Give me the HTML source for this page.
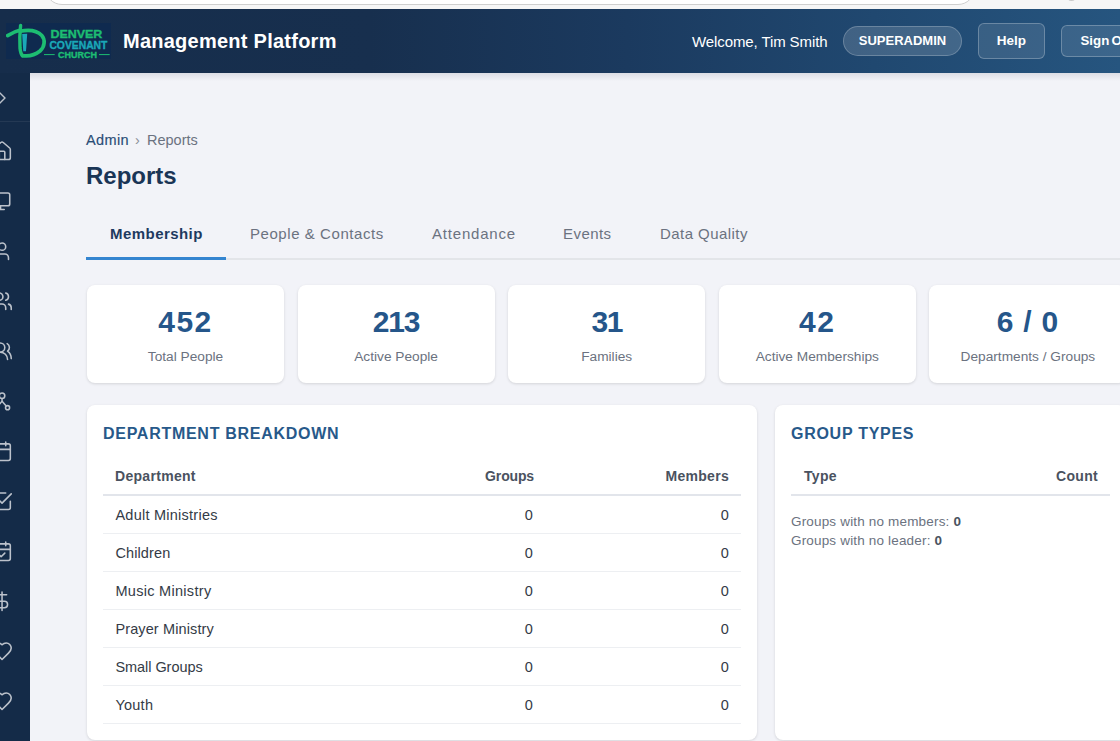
<!DOCTYPE html>
<html><head><meta charset="utf-8">
<style>
*{box-sizing:border-box;margin:0;padding:0}
html,body{width:1120px;height:741px;overflow:hidden;background:#f2f3f8;font-family:"Liberation Sans",sans-serif}
#chrome{position:absolute;left:0;top:0;width:1120px;height:9px;background:#f6f6f6;overflow:hidden}
#addr{position:absolute;left:45px;top:-29px;width:930px;height:34px;background:#fff;border:1px solid #cfcfcf;border-radius:17px}
#dot{position:absolute;left:1068px;top:-4px;width:7px;height:5px;border-radius:50%;background:#c9c9c9}
#hdr{position:absolute;left:0;top:9px;width:1120px;height:64px;background:linear-gradient(90deg,#162d4b 0%,#172f4e 33%,#1b3a5f 56%,#204870 78%,#26557f 100%)}
#logo{position:absolute;left:6px;top:14px;width:105px;height:36px;background:#0f2a4f}
#title{position:absolute;left:123px;top:21px;color:#fff;font-weight:bold;font-size:20px;letter-spacing:0.25px;white-space:nowrap}
#welcome{position:absolute;left:692px;top:24px;color:#fff;font-size:15px;white-space:nowrap}
#pill{position:absolute;left:843px;top:17px;width:119px;height:30px;border-radius:15px;background:rgba(255,255,255,.15);border:1px solid rgba(255,255,255,.22);color:#fff;font-weight:bold;font-size:13px;text-align:center;line-height:28px}
.hbtn{position:absolute;top:14px;height:36px;border-radius:6px;background:rgba(255,255,255,.1);border:1px solid rgba(255,255,255,.25);color:#fff;font-weight:bold;font-size:13.5px;line-height:34px;padding:0 16px;white-space:nowrap}
#side{position:absolute;left:0;top:73px;width:30px;height:668px;background:#142b48;overflow:hidden}
#sep{position:absolute;left:0;top:48px;width:30px;height:1px;background:rgba(255,255,255,.07)}
#main{position:absolute;left:30px;top:73px;width:1090px;height:668px;background:#f2f3f8;overflow:hidden}
#shadow{position:absolute;left:0;top:0;width:1090px;height:8px;background:linear-gradient(180deg,rgba(20,30,60,.10),rgba(20,30,60,0))}
.crumb{position:absolute;top:59px;font-size:14.5px;white-space:nowrap}
#h1{position:absolute;left:56px;top:89px;font-size:24px;font-weight:bold;color:#1a3556}
.tab{position:absolute;top:151.5px;font-size:15px;letter-spacing:0.45px;color:#6b7280;white-space:nowrap}
#tabline{position:absolute;left:56px;top:185px;width:1040px;height:2px;background:#e3e5e9}
#tabact{position:absolute;left:56px;top:184px;width:140px;height:3px;background:#3485d0}
.stat{position:absolute;top:212px;width:197px;height:98px;background:#fff;border-radius:8px;box-shadow:0 1px 3px rgba(0,0,0,.13)}
.stat .n{position:absolute;left:0;right:0;top:20px;text-align:center;font-size:30px;letter-spacing:1.5px;font-weight:bold;color:#25568a}
.stat .l{position:absolute;left:0;right:0;top:63.5px;text-align:center;font-size:13.7px;color:#6b7280}
.card{position:absolute;top:332px;height:335px;background:#fff;border-radius:8px;box-shadow:0 1px 3px rgba(0,0,0,.13);overflow:hidden}
.ctitle{position:absolute;left:16px;top:20.3px;font-size:16px;font-weight:bold;letter-spacing:0.72px;color:#27598a;white-space:nowrap}
.th{position:absolute;top:63px;font-size:14px;letter-spacing:0.3px;font-weight:bold;color:#4a5260;white-space:nowrap}
.td{position:absolute;font-size:14.5px;letter-spacing:0.25px;color:#343b46;white-space:nowrap}
.hline{position:absolute;height:2px;background:#e2e5eb}
.rline{position:absolute;height:1px;background:#edeff2}
.note{position:absolute;left:16px;font-size:13.5px;letter-spacing:0.17px;color:#6b7280;white-space:nowrap}
.note b{color:#4a5260}
</style></head><body>
<div id="chrome"><div id="addr"></div><div id="dot"></div></div>
<div id="hdr">
  <div id="logo">
    <svg width="105" height="36" viewBox="0 0 105 36" style="position:absolute;left:0;top:0">
      <g fill="none" stroke="#1dbd72" stroke-linecap="round">
        <path d="M1.6 12.6 C5 10.5 9 8.2 14.5 7" stroke-width="3.6"/>
        <path d="M14 8.2 C22 6.6 31 7.3 35.8 12.5 C39.3 16.5 39 23.5 34 28 C29 32 22 33.4 16.5 32.6" stroke-width="3.7"/>
        <path d="M14.6 2.4 C13.9 9 13.5 18 14 25 C14.4 29 15.3 31.5 16.5 32.8" stroke-width="3.4"/>
      </g>
      <path d="M16.2 11 L21.2 10.8 L20 28.2 L17.3 28.2 Z" fill="#1aa8b8"/>
      <g font-family="Liberation Sans" font-weight="bold" stroke-width="0.35">
        <text x="44.4" y="15" font-size="10.8" fill="#1dbd72" stroke="#1dbd72" textLength="52" lengthAdjust="spacingAndGlyphs">DENVER</text>
        <text x="43.4" y="25.8" font-size="10.2" fill="#1aa8b8" stroke="#1aa8b8" textLength="58" lengthAdjust="spacingAndGlyphs">COVENANT</text>
        <text x="52.1" y="34.5" font-size="8.3" fill="#1dbd72" stroke="#1dbd72" textLength="39" lengthAdjust="spacingAndGlyphs">CHURCH</text>
      </g>
      <path d="M38 31.6h10.7M93 31.6h10.7" stroke="#1dbd72" stroke-width="1"/>
    </svg>
  </div>
  <div id="title">Management Platform</div>
  <div id="welcome" style="letter-spacing:-0.1px">Welcome, Tim Smith</div>
  <div id="pill">SUPERADMIN</div>
  <div class="hbtn" style="left:978px;width:67px;padding:0;text-align:center">Help</div>
  <div class="hbtn" style="left:1061px;top:16px;height:32px;line-height:30px;width:90px;padding-left:18.5px;border-radius:6px;font-size:13.3px;word-spacing:-1.5px">Sign Out</div>
</div>
<div id="side"><div id="sep"></div>
  <svg width="30" height="668" style="position:absolute;left:0;top:0" fill="none" stroke="#bcc2cb" stroke-width="1.7" stroke-linecap="round" stroke-linejoin="round">
<g transform="translate(-7.5,15) scale(0.833)"><path d="m9 6 6 6-6 6"/></g>
<g transform="translate(-9,67.2) scale(0.92)"><path d="M15 21v-8a1 1 0 0 0-1-1h-4a1 1 0 0 0-1 1v8"/><path d="M3 10a2 2 0 0 1 .709-1.528l7-5.999a2 2 0 0 1 2.582 0l7 5.999A2 2 0 0 1 21 10v9a2 2 0 0 1-2 2H5a2 2 0 0 1-2-2z"/></g>
<g transform="translate(-10.5,117.2) scale(0.92)"><rect width="20" height="14" x="2" y="3" rx="2"/><path d="M8 21h8M12 17v4"/></g>
<g transform="translate(-9,167.2) scale(0.92)"><path d="M19 21v-2a4 4 0 0 0-4-4H9a4 4 0 0 0-4 4v2"/><circle cx="12" cy="7" r="4"/></g>
<g transform="translate(-9,217.2) scale(0.92)"><path d="M16 21v-2a4 4 0 0 0-4-4H6a4 4 0 0 0-4 4v2"/><circle cx="9" cy="7" r="4"/><path d="M22 21v-2a4 4 0 0 0-3-3.87"/><path d="M16 3.13a4 4 0 0 1 0 7.75"/></g>
<g transform="translate(-9,267.2) scale(0.92)"><path d="M18 21a8 8 0 0 0-16 0"/><circle cx="10" cy="8" r="5"/><path d="M22 20c0-3.37-2-6.5-4-8a5 5 0 0 0-.45-8.3"/></g>
<g transform="translate(-9,317.2) scale(0.92)"><circle cx="12" cy="6" r="3"/><circle cx="18" cy="19" r="2.2"/><circle cx="6" cy="19" r="2.2"/><path d="M12 9v3l4.5 5.2M12 12l-4.5 5.2"/></g>
<g transform="translate(-9,367.2) scale(0.92)"><path d="M8 2v4M16 2v4"/><rect width="18" height="18" x="3" y="4" rx="2"/><path d="M3 10h18"/></g>
<g transform="translate(-9,417.2) scale(0.92)"><path d="m9 11 3 3L22 4"/><path d="M21 12v7a2 2 0 0 1-2 2H5a2 2 0 0 1-2-2V5a2 2 0 0 1 2-2h11"/></g>
<g transform="translate(-9,467.2) scale(0.92)"><path d="M8 2v4M16 2v4"/><rect width="18" height="18" x="3" y="4" rx="2"/><path d="M3 10h18"/><path d="m9 16 2 2 4-4"/></g>
<g transform="translate(-9,517.2) scale(0.92)"><path d="M12 2v20"/><path d="M17 5H9.5a3.5 3.5 0 0 0 0 7h5a3.5 3.5 0 0 1 0 7H6"/></g>
<g transform="translate(-9,567.2) scale(0.92)"><path d="M19 14c1.49-1.46 3-3.21 3-5.5A5.5 5.5 0 0 0 16.5 3c-1.76 0-3 .5-4.5 2-1.5-1.5-2.74-2-4.5-2A5.5 5.5 0 0 0 2 8.5c0 2.3 1.5 4.05 3 5.5l7 7Z"/></g>
<g transform="translate(-9,617.2) scale(0.92)"><path d="M19 14c1.49-1.46 3-3.21 3-5.5A5.5 5.5 0 0 0 16.5 3c-1.76 0-3 .5-4.5 2-1.5-1.5-2.74-2-4.5-2A5.5 5.5 0 0 0 2 8.5c0 2.3 1.5 4.05 3 5.5l7 7Z"/></g>
  </svg>
</div>
<div id="main">
  <div id="shadow"></div>
  <div class="crumb" style="left:56px;top:59px;color:#2a4d76;letter-spacing:0.38px;-webkit-text-stroke:0.15px #2a4d76">Admin</div>
  <div class="crumb" style="left:105px;color:#8a9099">›</div>
  <div class="crumb" style="left:117px;color:#6b7280">Reports</div>
  <div id="h1">Reports</div>
  <div id="tabline"></div>
  <div id="tabact"></div>
  <div class="tab" style="left:80px;color:#1e3a5f;font-weight:bold">Membership</div>
  <div class="tab" style="left:220px;letter-spacing:0.56px">People &amp; Contacts</div>
  <div class="tab" style="left:402px;letter-spacing:0.8px">Attendance</div>
  <div class="tab" style="left:533px">Events</div>
  <div class="tab" style="left:630px">Data Quality</div>

  <div class="stat" style="left:57px"><div class="n">452</div><div class="l">Total People</div></div>
  <div class="stat" style="left:267.6px"><div class="n" style="letter-spacing:-1.1px">213</div><div class="l">Active People</div></div>
  <div class="stat" style="left:478.2px"><div class="n" style="letter-spacing:-1.5px">31</div><div class="l">Families</div></div>
  <div class="stat" style="left:688.8px"><div class="n">42</div><div class="l">Active Memberships</div></div>
  <div class="stat" style="left:899.4px"><div class="n" style="letter-spacing:0.75px">6 / 0</div><div class="l">Departments / Groups</div></div>

  <div class="card" style="left:57px;width:670px">
    <div class="ctitle">DEPARTMENT BREAKDOWN</div>
    <div class="th" style="left:28px">Department</div>
    <div class="th" style="right:223px;letter-spacing:-0.15px">Groups</div>
    <div class="th" style="right:28px">Members</div>
    <div class="hline" style="left:16px;width:638px;top:89px"></div>
<div class="td" style="left:28.4px;top:101.6px;letter-spacing:0.25px">Adult Ministries</div><div class="td r" style="right:224px;top:101.6px">0</div><div class="td r" style="right:28px;top:101.6px">0</div><div class="rline" style="left:16px;width:638px;top:128px"></div>
<div class="td" style="left:28.4px;top:139.6px;letter-spacing:0.12px">Children</div><div class="td r" style="right:224px;top:139.6px">0</div><div class="td r" style="right:28px;top:139.6px">0</div><div class="rline" style="left:16px;width:638px;top:166px"></div>
<div class="td" style="left:28.4px;top:177.6px;letter-spacing:0.3px">Music Ministry</div><div class="td r" style="right:224px;top:177.6px">0</div><div class="td r" style="right:28px;top:177.6px">0</div><div class="rline" style="left:16px;width:638px;top:204px"></div>
<div class="td" style="left:28.4px;top:215.6px;letter-spacing:0.12px">Prayer Ministry</div><div class="td r" style="right:224px;top:215.6px">0</div><div class="td r" style="right:28px;top:215.6px">0</div><div class="rline" style="left:16px;width:638px;top:242px"></div>
<div class="td" style="left:28.4px;top:253.6px;letter-spacing:-0.05px">Small Groups</div><div class="td r" style="right:224px;top:253.6px">0</div><div class="td r" style="right:28px;top:253.6px">0</div><div class="rline" style="left:16px;width:638px;top:280px"></div>
<div class="td" style="left:28.4px;top:291.6px;letter-spacing:0.25px">Youth</div><div class="td r" style="right:224px;top:291.6px">0</div><div class="td r" style="right:28px;top:291.6px">0</div><div class="rline" style="left:16px;width:638px;top:318px"></div>
  </div>
  <div class="card" style="left:745px;width:351px">
    <div class="ctitle">GROUP TYPES</div>
    <div class="th" style="left:29px">Type</div>
    <div class="th" style="right:28px">Count</div>
    <div class="hline" style="left:16px;width:319px;top:89px"></div>
    <div class="note" style="top:109px">Groups with no members: <b>0</b></div>
    <div class="note" style="top:128px">Groups with no leader: <b>0</b></div>
  </div>
</div>
</body></html>
